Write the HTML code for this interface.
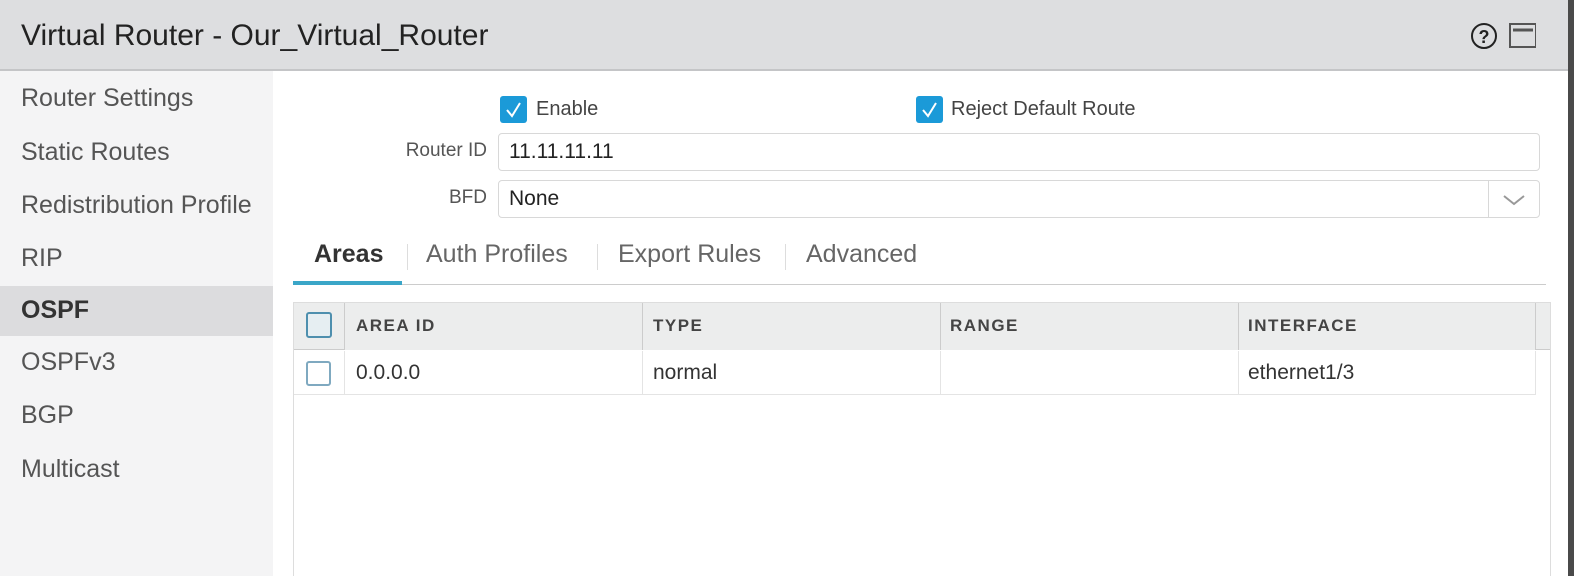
<!DOCTYPE html>
<html><head><style>
*{margin:0;padding:0;box-sizing:border-box}
body{width:1574px;height:576px;overflow:hidden;background:#fff;font-family:"Liberation Sans",sans-serif;position:relative}
.a{position:absolute}
.hdr{left:0;top:0;width:1568px;height:71px;background:#dddee0;border-bottom:2px solid #c4c5c7}
.title{left:21px;top:19px;font-size:30px;color:#222}
.side{left:0;top:71px;width:273px;height:505px;background:#f4f4f5}
.si{left:21px;font-size:25px;color:#555}
.sel{left:0;top:286px;width:273px;height:50px;background:#dcdcde}
.lbl{font-size:20px;color:#444}
.rl{font-size:19px;color:#555;text-align:right;width:120px}
.inp{border:1px solid #d8d8d8;border-radius:4px;height:38px;font-size:21px;color:#222;padding:6px 10px}
.tab{font-size:25px;color:#666;top:240px}
.hcell{top:303px;height:47px;font-size:17px;font-weight:bold;letter-spacing:1.5px;color:#444;padding-top:13px;background:#eceded;border-right:1px solid #ccc}
.rcell{top:351px;height:44px;font-size:21px;color:#333;padding-top:10px;border-right:1px solid #e4e4e4;border-bottom:1px solid #e4e4e4}
</style></head><body>
<div class="a hdr"></div>
<div class="a title">Virtual Router - Our_Virtual_Router</div>
<svg class="a" style="left:1470px;top:22px" width="66" height="28"><circle cx="14" cy="14" r="12" fill="none" stroke="#222" stroke-width="2"/><text x="14" y="21" font-size="18" font-weight="bold" text-anchor="middle" font-family="Liberation Sans" fill="#222">?</text><rect x="40" y="2" width="26" height="23" fill="none" stroke="#555" stroke-width="2"/><line x1="43" y1="8" x2="63" y2="8" stroke="#555" stroke-width="3"/></svg>
<div class="a" style="left:1568px;top:0;width:6px;height:576px;background:#4a4a4a"></div>
<div class="a side"></div>
<div class="a sel"></div>
<div class="a si" style="top:84px">Router Settings</div>
<div class="a si" style="top:138px">Static Routes</div>
<div class="a si" style="top:191px">Redistribution Profile</div>
<div class="a si" style="top:244px">RIP</div>
<div class="a si" style="top:296px;font-weight:bold;color:#333">OSPF</div>
<div class="a si" style="top:348px">OSPFv3</div>
<div class="a si" style="top:401px">BGP</div>
<div class="a si" style="top:455px">Multicast</div>

<svg class="a" style="left:500px;top:96px" width="27" height="27"><rect width="27" height="27" rx="3" fill="#1b9ad8"/><path d="M7 14 L12 20 L20 7" fill="none" stroke="#fff" stroke-width="2"/></svg>
<div class="a lbl" style="left:536px;top:98px">Enable</div>
<svg class="a" style="left:916px;top:96px" width="27" height="27"><rect width="27" height="27" rx="3" fill="#1b9ad8"/><path d="M7 14 L12 20 L20 7" fill="none" stroke="#fff" stroke-width="2"/></svg>
<div class="a lbl" style="left:951px;top:98px">Reject Default Route</div>
<div class="a rl" style="left:367px;top:140px">Router ID</div>
<div class="a inp" style="left:498px;top:133px;width:1042px">11.11.11.11</div>
<div class="a rl" style="left:367px;top:187px">BFD</div>
<div class="a inp" style="left:498px;top:180px;width:1042px">None</div>
<div class="a" style="left:1488px;top:181px;width:1px;height:36px;background:#d8d8d8"></div>
<svg class="a" style="left:1502px;top:192px" width="24" height="16"><path d="M2 4 L12 12 L22 4" fill="none" stroke="#999" stroke-width="2"/></svg>

<div class="a tab" style="left:314px;color:#333;font-weight:bold">Areas</div>
<div class="a" style="left:407px;top:244px;width:1px;height:26px;background:#ddd"></div>
<div class="a tab" style="left:426px">Auth Profiles</div>
<div class="a" style="left:597px;top:244px;width:1px;height:26px;background:#ddd"></div>
<div class="a tab" style="left:618px">Export Rules</div>
<div class="a" style="left:785px;top:244px;width:1px;height:26px;background:#ddd"></div>
<div class="a tab" style="left:806px">Advanced</div>
<div class="a" style="left:293px;top:284px;width:1253px;height:1px;background:#ccc"></div>
<div class="a" style="left:293px;top:281px;width:109px;height:4px;background:#3aa6c8"></div>

<div class="a" style="left:293px;top:302px;width:1258px;height:274px;border:1px solid #ddd;border-bottom:none"></div>
<div class="a" style="left:294px;top:303px;width:1256px;height:47px;background:#eceded;border-bottom:1px solid #ccc"></div>
<div class="a" style="left:306px;top:312px;width:26px;height:26px;border:2px solid #4e8fae;border-radius:3px;background:#e6eef2"></div>
<div class="a" style="left:344px;top:303px;width:1px;height:47px;background:#ccc"></div>
<div class="a hcell" style="left:345px;width:298px;padding-left:11px">AREA ID</div>
<div class="a hcell" style="left:643px;width:298px;padding-left:10px">TYPE</div>
<div class="a hcell" style="left:941px;width:298px;padding-left:9px">RANGE</div>
<div class="a hcell" style="left:1239px;width:297px;padding-left:9px">INTERFACE</div>
<div class="a" style="left:294px;top:351px;width:1242px;height:44px;border-bottom:1px solid #e4e4e4"></div>
<div class="a" style="left:306px;top:361px;width:25px;height:25px;border:2px solid #7fa9c0;border-radius:3px"></div>
<div class="a" style="left:344px;top:351px;width:1px;height:44px;background:#e4e4e4"></div>
<div class="a rcell" style="left:345px;width:298px;padding-left:11px">0.0.0.0</div>
<div class="a rcell" style="left:643px;width:298px;padding-left:10px">normal</div>
<div class="a rcell" style="left:941px;width:298px"></div>
<div class="a rcell" style="left:1239px;width:297px;padding-left:9px">ethernet1/3</div>
</body></html>
